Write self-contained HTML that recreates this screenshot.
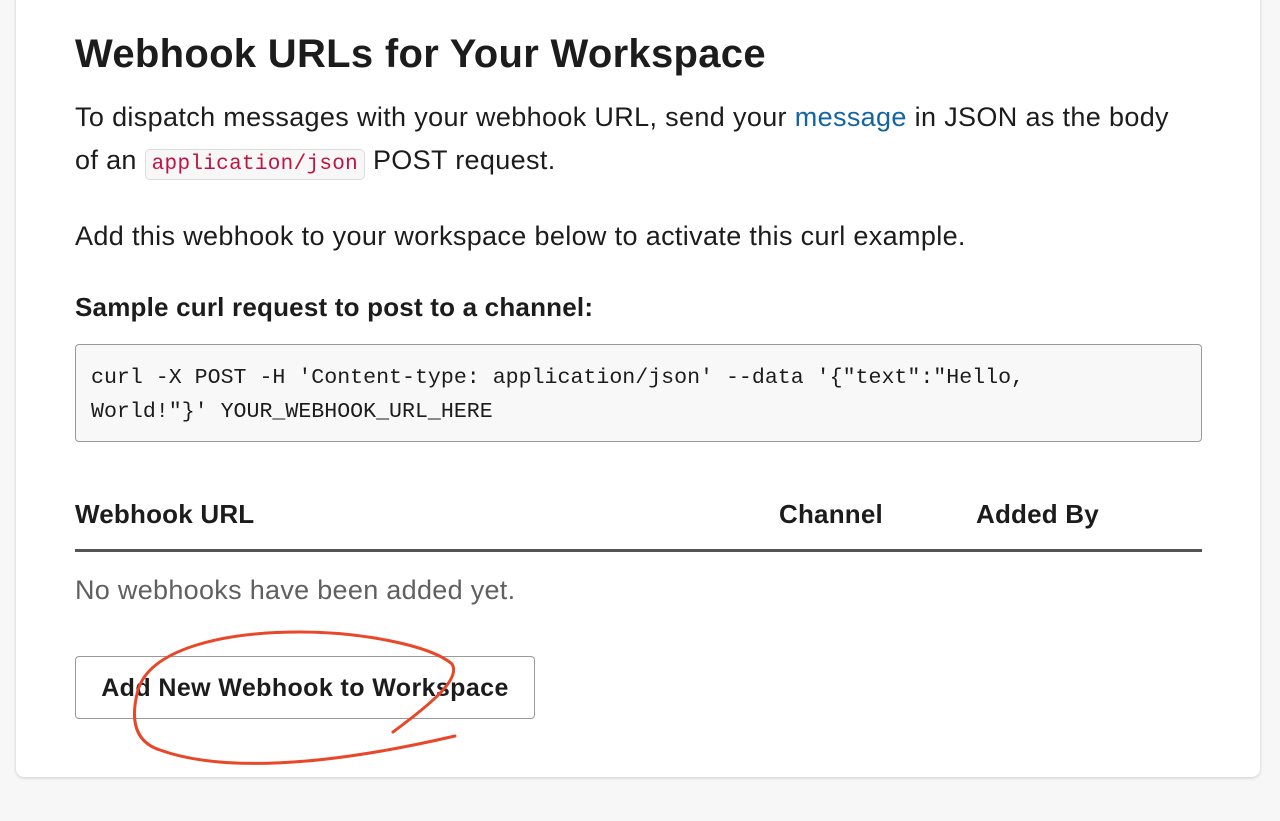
<!DOCTYPE html>
<html><head><meta charset="utf-8"><style>
html,body{margin:0;padding:0;width:1280px;height:821px;overflow:hidden;background:#f7f7f7;font-family:"Liberation Sans",sans-serif;color:#1d1c1d}
.card{position:absolute;left:16px;top:-20px;width:1244px;height:797px;background:#fff;border-radius:8px;box-shadow:0 1px 3px rgba(0,0,0,.18)}
h1{position:absolute;left:75px;top:32px;margin:0;font-size:40px;font-weight:bold;letter-spacing:0.3px}
.p{position:absolute;left:75px;font-size:27px;line-height:43px;margin:0;letter-spacing:0.35px}
a{color:#1264a3;text-decoration:none}
code{font-family:"Liberation Mono",monospace;font-size:21px;letter-spacing:0.3px;color:#c01343;background:#f7f7f7;border:1px solid #ddd;border-radius:5px;padding:3px 6px}
.h3{position:absolute;left:75px;top:292px;font-size:26px;font-weight:bold;letter-spacing:0.2px}
.pre{position:absolute;left:75px;top:344px;width:1127px;height:98px;box-sizing:border-box;border:1px solid #999;border-radius:4px;background:#f8f8f8;font-family:"Liberation Mono",monospace;font-size:21.6px;line-height:34px;padding:16px 15px;white-space:pre}
.th{position:absolute;top:499px;font-size:26px;font-weight:bold;letter-spacing:0.2px}
.line{position:absolute;left:75px;top:549px;width:1127px;height:3px;background:#555}
.empty{position:absolute;left:75px;top:575px;font-size:27px;color:#616061;letter-spacing:0.3px}
.btn{position:absolute;left:75px;top:656px;width:460px;height:63px;box-sizing:border-box;border:1px solid #999;border-radius:4px;font-size:25px;font-weight:bold;text-align:center;line-height:63px;letter-spacing:0.4px}
</style></head><body>
<div class="card"></div>
<h1>Webhook URLs for Your Workspace</h1>
<p class="p" style="top:96px">To dispatch messages with your webhook URL, send your <a>message</a> in JSON as the body<br>of an <code>application/json</code> POST request.</p>
<p class="p" style="top:215px">Add this webhook to your workspace below to activate this curl example.</p>
<div class="h3">Sample curl request to post to a channel:</div>
<div class="pre">curl -X POST -H 'Content-type: application/json' --data '{"text":"Hello,
World!"}' YOUR_WEBHOOK_URL_HERE</div>
<div class="th" style="left:75px">Webhook URL</div>
<div class="th" style="left:779px">Channel</div>
<div class="th" style="left:976px">Added By</div>
<div class="line"></div>
<div class="empty">No webhooks have been added yet.</div>
<div class="btn">Add New Webhook to Workspace</div>
<svg width="1280" height="821" style="position:absolute;left:0;top:0">
<path d="M393,732 C425,708 462,680 452,664 C430,645 360,632 300,632 C220,632 150,650 138,690 C130,720 135,742 160,750 C210,768 300,772 455,736" fill="none" stroke="#e8472a" stroke-width="3" stroke-linecap="round"/>
</svg>
</body></html>
